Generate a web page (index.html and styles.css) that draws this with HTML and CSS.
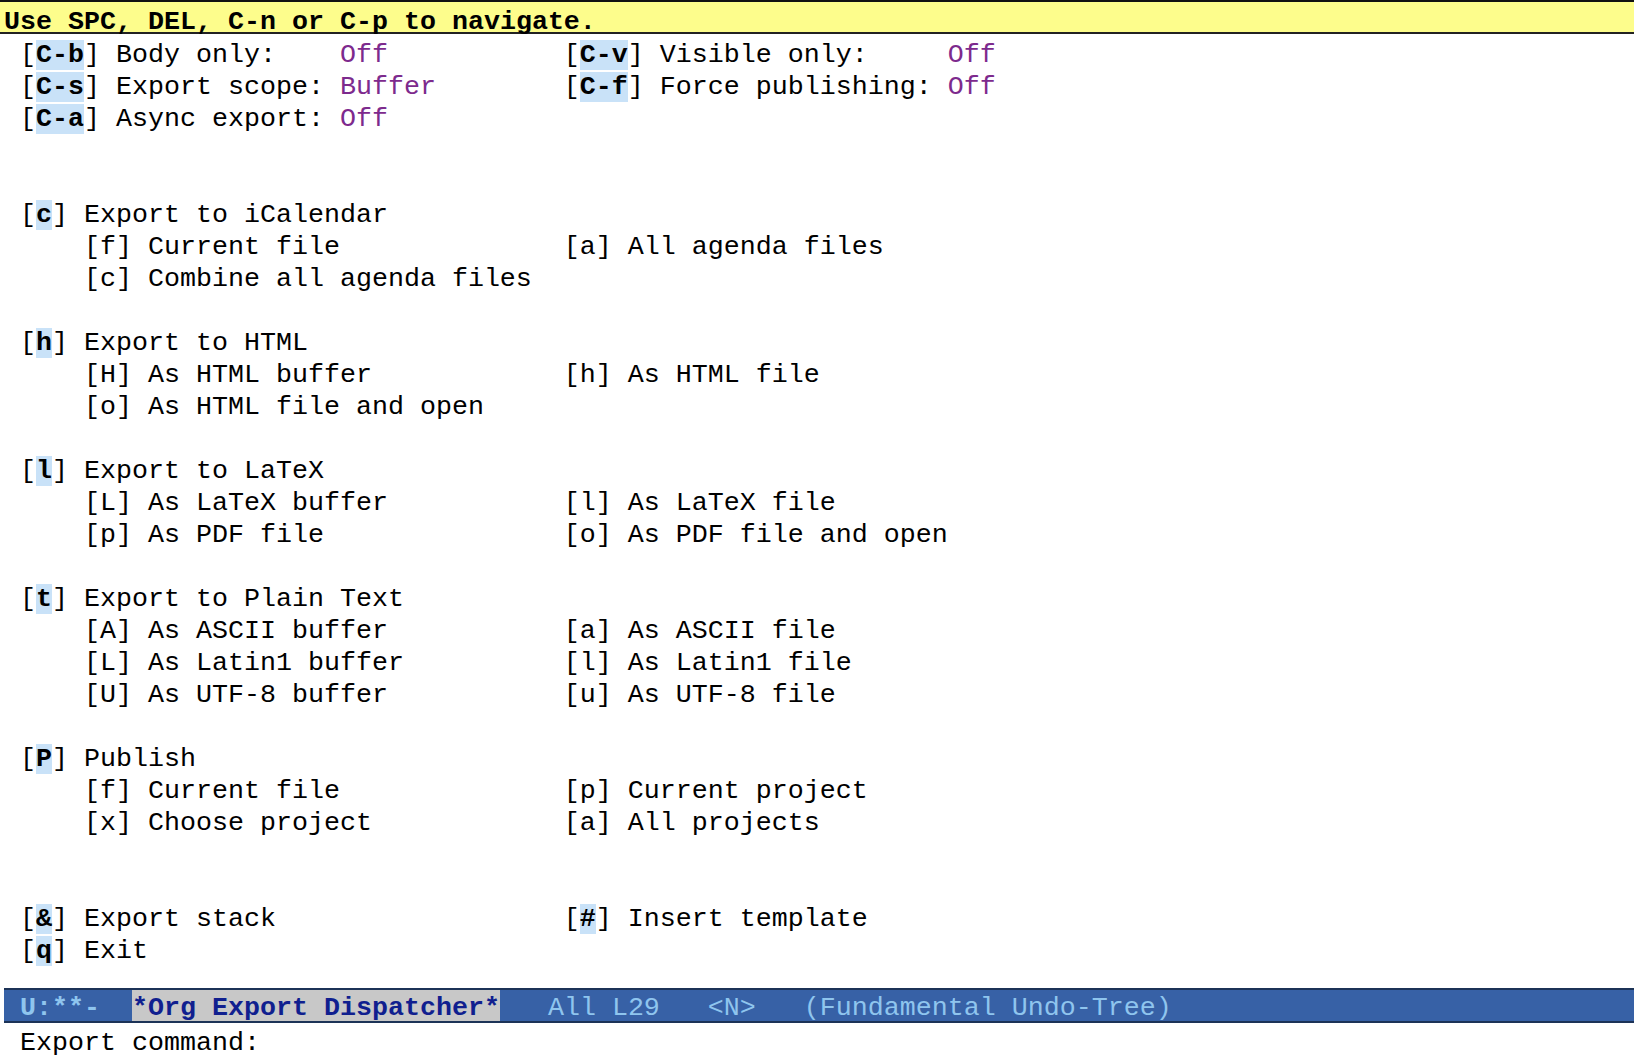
FILE: index.html
```html
<!DOCTYPE html>
<html lang="en">
<head>
<meta charset="utf-8">
<title>*Org Export Dispatcher*</title>
<link rel="stylesheet" href="styles.css">
</head>
<body>
<div class="frame">
<div class="header-line"><span class="header-text">Use SPC, DEL, C-n or C-p to navigate.</span></div>
<div class="buffer">
<div class="line two"><span>[<span class="key">C-b</span>] Body only:    <span class="val">Off</span></span><span>[<span class="key">C-v</span>] Visible only:     <span class="val">Off</span></span></div>
<div class="line two"><span>[<span class="key">C-s</span>] Export scope: <span class="val">Buffer</span></span><span>[<span class="key">C-f</span>] Force publishing: <span class="val">Off</span></span></div>
<div class="line">[<span class="key">C-a</span>] Async export: <span class="val">Off</span></div>
<div class="line"></div>
<div class="line"></div>
<div class="line">[<span class="key">c</span>] Export to iCalendar</div>
<div class="line sub two"><span>[f] Current file</span><span>[a] All agenda files</span></div>
<div class="line sub">[c] Combine all agenda files</div>
<div class="line"></div>
<div class="line">[<span class="key">h</span>] Export to HTML</div>
<div class="line sub two"><span>[H] As HTML buffer</span><span>[h] As HTML file</span></div>
<div class="line sub">[o] As HTML file and open</div>
<div class="line"></div>
<div class="line">[<span class="key">l</span>] Export to LaTeX</div>
<div class="line sub two"><span>[L] As LaTeX buffer</span><span>[l] As LaTeX file</span></div>
<div class="line sub two"><span>[p] As PDF file</span><span>[o] As PDF file and open</span></div>
<div class="line"></div>
<div class="line">[<span class="key">t</span>] Export to Plain Text</div>
<div class="line sub two"><span>[A] As ASCII buffer</span><span>[a] As ASCII file</span></div>
<div class="line sub two"><span>[L] As Latin1 buffer</span><span>[l] As Latin1 file</span></div>
<div class="line sub two"><span>[U] As UTF-8 buffer</span><span>[u] As UTF-8 file</span></div>
<div class="line"></div>
<div class="line">[<span class="key">P</span>] Publish</div>
<div class="line sub two"><span>[f] Current file</span><span>[p] Current project</span></div>
<div class="line sub two"><span>[x] Choose project</span><span>[a] All projects</span></div>
<div class="line"></div>
<div class="line"></div>
<div class="line two"><span>[<span class="key">&amp;</span>] Export stack</span><span>[<span class="key">#</span>] Insert template</span></div>
<div class="line">[<span class="key">q</span>] Exit</div>
</div>
<div class="mode-line"> <span class="ml-state">U:**-</span>  <span class="ml-buf">*Org Export Dispatcher*</span>   All L29   &lt;N&gt;   (Fundamental Undo-Tree)</div>
<div class="minibuffer">Export command:</div>
</div>
</body>
</html>
```
FILE: styles.css
```css
html, body {
  margin: 0;
  padding: 0;
  background: #ffffff;
}

body {
  font-family: "Liberation Mono", "Courier New", monospace;
  font-size: 26.667px;
  color: #000000;
}

.frame {
  display: flex;
  flex-direction: column;
  width: 1634px;
  height: 1060px;
  overflow: hidden;
}

.header-line {
  background: #fdfd8c;
  border-top: 2px solid #111111;
  border-bottom: 2px solid #222222;
  height: 30px;
  padding-left: 4px;
  font-weight: bold;
  white-space: pre;
}

.header-text {
  display: block;
  height: 30px;
  line-height: 40px;
}

.buffer {
  flex: 1;
  padding: 5px 0 0 4px;
}

.line {
  height: 32px;
  line-height: 32px;
  white-space: pre;
  padding-left: 1ch;
}

.line.two {
  display: grid;
  grid-template-columns: 34ch auto;
}

.line.sub {
  padding-left: 5ch;
}

.line.sub.two {
  grid-template-columns: 30ch auto;
}

.key {
  background: #c9e2f8;
  font-weight: bold;
}

.val {
  color: #7d2a8d;
}

.mode-line {
  margin-left: 4px;
  height: 31px;
  line-height: 37px;
  border-top: 2px solid #1c3357;
  border-bottom: 2px solid #1c3357;
  background: #3761a6;
  color: #8fc5ee;
  white-space: pre;
  overflow: hidden;
}

.ml-state {
  font-weight: bold;
}

.ml-buf {
  display: inline-block;
  background: #c8c8c8;
  color: #101f8f;
  font-weight: bold;
}

.minibuffer {
  box-sizing: border-box;
  height: 37px;
  padding: 4px 0 0 20px;
  line-height: 32px;
  white-space: pre;
}
```
